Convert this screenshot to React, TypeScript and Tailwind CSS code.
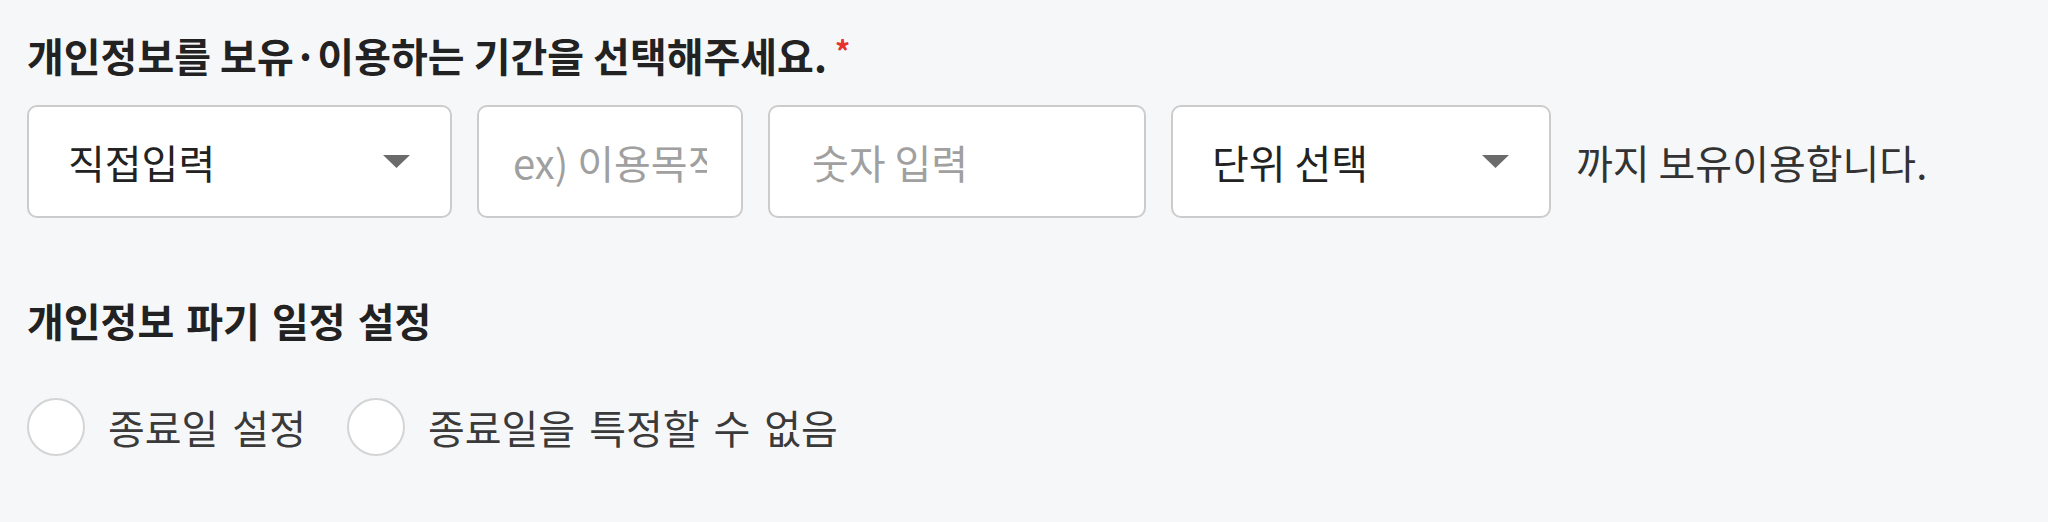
function Caret() {
  return (
    <svg width="27" height="13" viewBox="0 0 27 13" className="shrink-0">
      <path d="M0 0h27L13.5 13z" fill="#6b6b6b" />
    </svg>
  );
}

function SelectBox({ label, width }: { label: string; width: string }) {
  return (
    <div
      className={`${width} h-[113px] shrink-0 flex items-center justify-between pl-[39px] pr-[40px] bg-white border-2 border-[#cccccc] rounded-[10px]`}
    >
      <span className="text-[#222222]">{label}</span>
      <Caret />
    </div>
  );
}

function Radio({ label }: { label: string }) {
  return (
    <label className="flex items-center gap-[23px]">
      <span className="w-[58px] h-[58px] rounded-full bg-white border-2 border-[#d4d4d4] shrink-0" />
      <span className="text-[#3a3a3a] [word-spacing:5px]">{label}</span>
    </label>
  );
}

export default function App() {
  return (
    <div className="min-h-[522px] bg-[#f6f7f9] pl-[27px] pt-[31px] font-['Noto_Sans_CJK_KR','Noto_Sans',sans-serif] text-[40px] leading-[48px]">
      <h2 className="flex items-start font-semibold text-[#222222]">
        개인정보를 보유·이용하는 기간을 선택해주세요.
        <span className="ml-[8px] mt-[4px] text-[30px] leading-[30px] text-[#e5322d]">*</span>
      </h2>

      <div className="mt-[26px] flex items-center gap-[25px]">
        <SelectBox label="직접입력" width="w-[425px]" />
        <input
          className="w-[266px] h-[113px] shrink-0 pl-[34px] pr-[34px] bg-white border-2 border-[#cccccc] rounded-[10px] outline-none placeholder:text-[#a0a0a0]"
          placeholder="ex) 이용목적"
        />
        <input
          className="w-[378px] h-[113px] shrink-0 pl-[42px] pr-[34px] bg-white border-2 border-[#cccccc] rounded-[10px] outline-none placeholder:text-[#a0a0a0]"
          placeholder="숫자 입력"
        />
        <SelectBox label="단위 선택" width="w-[380px]" />
        <span className="text-[#333333]">까지 보유이용합니다.</span>
      </div>

      <h3 className="mt-[78px] font-semibold text-[#222222] [word-spacing:3px]">개인정보 파기 일정 설정</h3>

      <div className="mt-[54px] flex items-center gap-[41px]">
        <Radio label="종료일 설정" />
        <Radio label="종료일을 특정할 수 없음" />
      </div>
    </div>
  );
}
